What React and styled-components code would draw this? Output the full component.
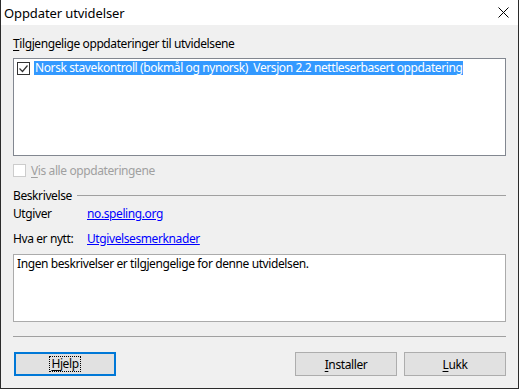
import React from "react";
import styled, { createGlobalStyle } from "styled-components";

const Global = createGlobalStyle`
  html, body { margin: 0; padding: 0; background: #ffffff; }
  body { font-family: "Noto Sans", "DejaVu Sans", sans-serif; font-size: 12px; color: #000; letter-spacing: -0.4px; }
  * { box-sizing: border-box; }
`;

const Window = styled.div`
  width: 519px;
  height: 389px;
  display: flex;
  flex-direction: column;
  border: 1px solid #2b2b2b;
  border-top: none;
  background: #f0f0f0;
  overflow: hidden;
`;

const TitleBar = styled.div`
  height: 25px;
  background: #ffffff;
  display: flex;
  align-items: center;
  justify-content: space-between;
  padding: 0 9px 0 3px;
  font-size: 13px;
  letter-spacing: -0.1px;
  flex-shrink: 0;
`;

const Content = styled.div`
  flex: 1;
  display: flex;
  flex-direction: column;
  padding: 0 12px 0 12px;
`;

const SectionLabel = styled.div`
  margin-top: 11px;
  height: 22px;
  line-height: 16px;
`;

const Mn = styled.span`
  text-decoration: underline;
  text-underline-offset: 2px;
`;

const ListBox = styled.div`
  height: 98px;
  background: #fff;
  border: 1px solid #828790;
  padding: 2px 2px;
`;

const ListRow = styled.div`
  display: flex;
  align-items: center;
  gap: 4px;
  height: 14px;
  padding-left: 1px;
`;

const Selected = styled.span`
  background: #3399ff;
  color: #fff;
  line-height: 14px;
  height: 14px;
  padding: 0 1px;
  white-space: pre;
`;

const Box = styled.span`
  width: 13px;
  height: 13px;
  border: 1px solid ${p => (p.disabled ? "#cccccc" : "#333333")};
  background: #fff;
  display: inline-flex;
  align-items: center;
  justify-content: center;
  flex-shrink: 0;
`;

const CheckRow = styled.div`
  margin-top: 8px;
  display: flex;
  align-items: center;
  gap: 5px;
  height: 13px;
  color: ${p => (p.disabled ? "#a0a0a0" : "#000")};
`;

const GroupHeader = styled.div`
  margin-top: 11px;
  display: flex;
  align-items: center;
  gap: 5px;
  height: 14px;
`;

const GroupLine = styled.div`
  flex: 1;
  height: 1px;
  background: #a0a0a0;
`;

const InfoGrid = styled.div`
  margin-top: -1px;
  display: grid;
  grid-template-columns: 74px 1fr;
  grid-auto-rows: 25px;
  align-items: center;
`;

const Link = styled.a`
  color: #0000ff;
  text-decoration: underline;
  justify-self: start;
`;

const DescBox = styled.div`
  margin-top: 3px;
  height: 68px;
  background: #fff;
  border: 1px solid #ababab;
  padding: 1px 3px;
  line-height: 16px;
`;

const Separator = styled.div`
  margin-top: 14px;
  height: 1px;
  background: #a0a0a0;
`;

const ButtonRow = styled.div`
  margin-top: 15px;
  display: flex;
  align-items: center;
  gap: 7px;
`;

const Spacer = styled.div`
  flex: 1;
`;

const Button = styled.button`
  width: 102px;
  height: 24px;
  margin-left: ${p => (p.$primary ? "1px" : "0")};
  background: #e1e1e1;
  border: ${p => (p.$primary ? "2px solid #0078d7" : "1px solid #adadad")};
  font-family: inherit;
  font-size: 12px;
  letter-spacing: -0.4px;
  color: #000;
  padding: 0;
  display: flex;
  align-items: center;
  justify-content: center;
`;

const Focus = styled.span`
  outline: 1px dotted #000;
  padding: 0 1px;
  line-height: 14px;
`;

const CloseIcon = () => (
  <svg width="11" height="11" viewBox="0 0 11 11">
    <path d="M0.5 0.5 L10.5 10.5 M10.5 0.5 L0.5 10.5" stroke="#000" strokeWidth="1" fill="none" />
  </svg>
);

const Tick = () => (
  <svg width="11" height="11" viewBox="0 0 11 11">
    <path d="M1.5 5.5 L4.5 8.5 L9.5 2.5" stroke="#333" strokeWidth="1.2" fill="none" />
  </svg>
);

export default function App() {
  return (
    <>
      <Global />
      <Window>
        <TitleBar>
          <span>Oppdater utvidelser</span>
          <CloseIcon />
        </TitleBar>
        <Content>
          <SectionLabel>
            <Mn>T</Mn>ilgjengelige oppdateringer til utvidelsene
          </SectionLabel>
          <ListBox>
            <ListRow>
              <Box><Tick /></Box>
              <Selected>Norsk stavekontroll (bokmål og nynorsk)  Versjon 2.2 nettleserbasert oppdatering</Selected>
            </ListRow>
          </ListBox>
          <CheckRow disabled>
            <Box disabled />
            <span><Mn>V</Mn>is alle oppdateringene</span>
          </CheckRow>
          <GroupHeader>
            <span>Beskrivelse</span>
            <GroupLine />
          </GroupHeader>
          <InfoGrid>
            <span>Utgiver</span>
            <Link href="#">no.speling.org</Link>
            <span>Hva er nytt:</span>
            <Link href="#">Utgivelsesmerknader</Link>
          </InfoGrid>
          <DescBox>Ingen beskrivelser er tilgjengelige for denne utvidelsen.</DescBox>
          <Separator />
          <ButtonRow>
            <Button $primary>
              <Focus><Mn>H</Mn>jelp</Focus>
            </Button>
            <Spacer />
            <Button><span><Mn>I</Mn>nstaller</span></Button>
            <Button><span><Mn>L</Mn>ukk</span></Button>
          </ButtonRow>
        </Content>
      </Window>
    </>
  );
}
